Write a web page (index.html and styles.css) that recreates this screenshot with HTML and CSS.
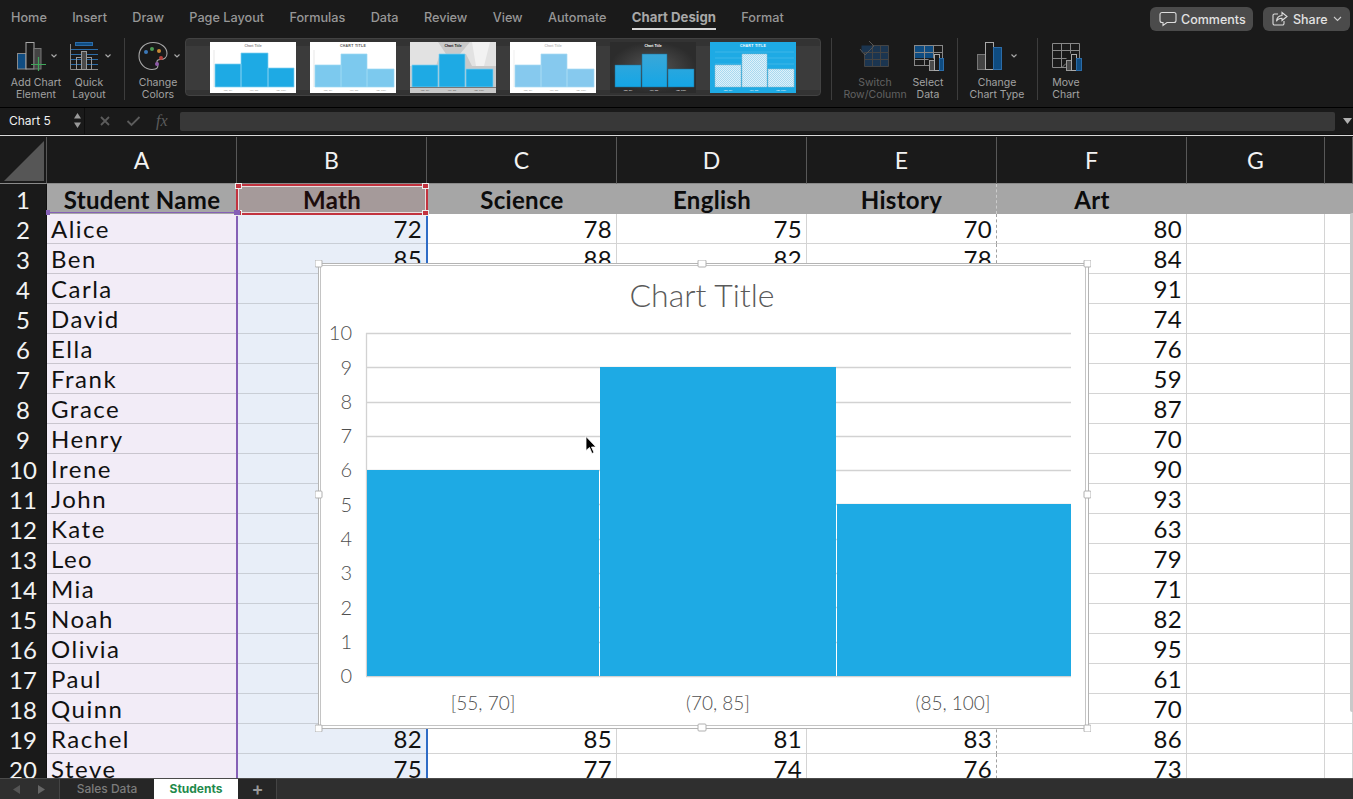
FILE: index.html
```html
<!DOCTYPE html>
<html lang="en">
<head>
  <meta charset="UTF-8">
  <title>Students - Chart Design</title>
  <link rel="stylesheet" href="styles.css">
</head>
<body>
  <header class="menubar">
    <nav class="tabs">
      <span>Home</span><span>Insert</span><span>Draw</span><span>Page Layout</span><span>Formulas</span><span>Data</span><span>Review</span><span>View</span><span>Automate</span><span class="active">Chart Design</span><span>Format</span>
    </nav>
    <button class="pill pill-comments">
      <svg width="18" height="16" viewBox="0 0 18 16"><path d="M3 1.5h12a2 2 0 0 1 2 2v6a2 2 0 0 1-2 2H8l-4 3v-3H3a2 2 0 0 1-2-2v-6a2 2 0 0 1 2-2z" fill="none" stroke="#ddd" stroke-width="1.1"/></svg>
      Comments
    </button>
    <button class="pill pill-share">
      <svg width="16" height="16" viewBox="0 0 16 16"><path d="M6 3H2.5A1.5 1.5 0 0 0 1 4.5v8A1.5 1.5 0 0 0 2.5 14h8a1.5 1.5 0 0 0 1.5-1.5V10" fill="none" stroke="#ddd" stroke-width="1.1"/><path d="M10 1.5l5 4-5 4V7.2c-3 0-4.5 1-5.5 3 .3-3.5 2-5.5 5.5-5.7z" fill="none" stroke="#ddd" stroke-width="1.1"/></svg>
      Share
      <svg width="9" height="6" viewBox="0 0 9 6"><path d="M1 1l3.5 3.5L8 1" fill="none" stroke="#ccc" stroke-width="1.1"/></svg>
    </button>
  </header>

  <section class="ribbon">
    <div class="tool tool-add">
      <svg width="60" height="34" viewBox="6 40 60 34">
        <rect x="17.5" y="53.5" width="8.5" height="15.5" fill="#0f4c81" stroke="#8a8a8a"/>
        <rect x="26" y="42.5" width="8" height="26.5" fill="#1a1a1a" stroke="#a8a8a8"/>
        <rect x="34" y="48.5" width="7" height="20.5" fill="#444" stroke="#777"/>
        <path d="M38.5 57v14M31 64.5h15" stroke="#3fa65a" stroke-width="1.2"/>
        <path class="chev" d="M51.5 54.5l2.5 2.5 2.5-2.5"/>
      </svg>
      <span>Add Chart<br>Element</span>
    </div>
    <div class="tool tool-quick">
      <svg width="46" height="34" viewBox="66 40 46 34">
        <rect x="75.5" y="42.5" width="17" height="3" fill="#0f4c81" stroke="#2c6ca8"/>
        <path d="M70 49.5h28M70 54.5h28M70 59.5h28M70 64.5h28" stroke="#2c6ca8"/>
        <path d="M70.5 44v25.5H98" fill="none" stroke="#888"/>
        <rect x="76.5" y="57.5" width="5" height="12" fill="none" stroke="#999"/>
        <rect x="81.5" y="51.5" width="5" height="18" fill="#4a4a4a" stroke="#999"/>
        <rect x="86.5" y="57.5" width="5" height="12" fill="none" stroke="#999"/>
        <path class="chev" d="M105.5 54.5l2.5 2.5 2.5-2.5"/>
      </svg>
      <span>Quick<br>Layout</span>
    </div>
    <div class="ribbon-sep sep-a"></div>
    <div class="tool tool-colors">
      <svg width="44" height="34" viewBox="136 40 44 34">
        <path d="M153 42.5c8 0 14 5 14 11 0 4-3 6-6.5 6-2.5 0-4 1-3.5 3 .5 2.5 1.5 3 .5 5-1 1.5-3 2-5.5 2-7 0-13-6-13-13.5 0-8 6-13.5 14-13.5z" fill="none" stroke="#a8a8a8" stroke-width="1.1"/>
        <circle cx="146" cy="52" r="2" fill="#3b78b8"/>
        <circle cx="152" cy="49" r="2" fill="#4c9a54"/>
        <circle cx="159" cy="51" r="2" fill="#c98a35"/>
        <circle cx="161" cy="58" r="2" fill="#b8403c"/>
        <circle cx="157" cy="64" r="2" fill="#8e5aa8"/>
        <path class="chev" d="M174.5 54.5l2.5 2.5 2.5-2.5"/>
      </svg>
      <span>Change<br>Colors</span>
    </div>

    <div class="gallery">
      <svg class="thumb" viewBox="0 0 86 51">
        <rect width="86" height="51" fill="#fff"/>
        <text class="t-title t-grey" x="43" y="5">Chart Title</text>
        <path d="M4 8v37" stroke="#ccc" stroke-width=".5"/>
        <path class="bar-a" d="M5 22h26v23H5zM31 11h27v34H31zM58 26h26v19H58z"/>
        <text class="t-axis t-grey" x="18" y="49">[55, 70]</text><text class="t-axis t-grey" x="44" y="49">(70, 85]</text><text class="t-axis t-grey" x="71" y="49">(85, 100]</text>
      </svg>
      <svg class="thumb" viewBox="0 0 86 51">
        <rect width="86" height="51" fill="#fff"/>
        <text class="t-title t-dark t-wide" x="43" y="5">CHART TITLE</text>
        <path d="M4 8v37" stroke="#ccc" stroke-width=".5"/>
        <path class="bar-b" d="M5 23h26v22H5zM31 12h26v33H31zM57 27h27v18H57z"/>
        <text class="t-axis t-grey" x="18" y="49">[55, 70]</text><text class="t-axis t-grey" x="44" y="49">(70, 85]</text><text class="t-axis t-grey" x="71" y="49">(85, 100]</text>
      </svg>
      <svg class="thumb" viewBox="0 0 86 51">
        <rect width="86" height="51" fill="#c9c9c9"/>
        <path d="M0 0h28l8 12 14 0 10-12h26v24H62L56 12H30L26 24H0z" fill="#e2e2e2"/>
        <path d="M62 0h18l-6 24h-8z" fill="#f2f2f2"/>
        <text class="t-title t-black" x="43" y="5">Chart Title</text>
        <path class="bar-a" d="M2 23h26v22H2zM29 12h26v33H29zM56 27h27v18H56z"/>
        <rect y="45" width="86" height="1" fill="#777"/>
        <text class="t-axis t-dark" x="15" y="49">[55, 70]</text><text class="t-axis t-dark" x="42" y="49">(70, 85]</text><text class="t-axis t-dark" x="69" y="49">(85, 100]</text>
      </svg>
      <svg class="thumb" viewBox="0 0 86 51">
        <rect width="86" height="51" fill="#fff"/>
        <text class="t-title t-pale" x="43" y="5">Chart Title</text>
        <path d="M4 8v37" stroke="#ddd" stroke-width=".5"/>
        <path class="bar-c" d="M5 23h26v22H5zM31 12h26v33H31zM57 27h27v18H57z"/>
        <text class="t-axis t-grey" x="18" y="49">[55, 70]</text><text class="t-axis t-grey" x="44" y="49">(70, 85]</text><text class="t-axis t-grey" x="71" y="49">(85, 100]</text>
      </svg>
      <svg class="thumb" viewBox="0 0 86 51">
        <defs>
          <radialGradient id="darkbg"><stop offset="0" stop-color="#555"/><stop offset="1" stop-color="#2c2c2c"/></radialGradient>
          <linearGradient id="darkbar" x1="0" y1="0" x2="0" y2="1"><stop offset="0" stop-color="#3aa7d8"/><stop offset="1" stop-color="#14a6e6"/></linearGradient>
        </defs>
        <rect width="86" height="51" fill="url(#darkbg)"/>
        <text class="t-title t-white" x="43" y="5">Chart Title</text>
        <path fill="url(#darkbar)" stroke="#1f6f96" stroke-width=".5" d="M5 23h26v22H5zM32 12h25v33H32zM58 27h26v18H58z"/>
        <text class="t-axis t-white" x="18" y="49">[55, 70]</text><text class="t-axis t-white" x="44" y="49">(70, 85]</text><text class="t-axis t-white" x="71" y="49">(85, 100]</text>
      </svg>
      <svg class="thumb" viewBox="0 0 86 51">
        <defs>
          <pattern id="check" width="2" height="2" patternUnits="userSpaceOnUse"><rect width="2" height="2" fill="#dff1fa"/><rect width="1" height="1" fill="#a9d9f0"/><rect x="1" y="1" width="1" height="1" fill="#a9d9f0"/></pattern>
        </defs>
        <rect width="86" height="51" fill="#1eaae4"/>
        <text class="t-title t-white t-wide" x="43" y="5">CHART TITLE</text>
        <path d="M5 10h79M5 16h79M5 22h79" stroke="#5cc3ec" stroke-width=".5"/>
        <path fill="url(#check)" stroke="#8fb9cc" stroke-width=".5" d="M5 23h26v22H5zM32 12h25v33H32zM58 27h26v18H58z"/>
        <text class="t-axis t-white" x="18" y="49">[55, 70]</text><text class="t-axis t-white" x="44" y="49">(70, 85]</text><text class="t-axis t-white" x="71" y="49">(85, 100]</text>
      </svg>
    </div>

    <div class="ribbon-sep sep-b"></div>
    <div class="tool tool-switch disabled">
      <svg width="64" height="34" viewBox="843 40 64 34">
        <path d="M861.5 45.5h27v21h-24v-14h-3z" fill="#1b3550"/>
        <path d="M864.5 52.5h24v14h-24zM864.5 59.5h24M872.5 45.5v21M880.5 45.5v21M872.5 45.5h16v7" fill="none" stroke="#444"/>
        <path d="M860 49l5 6 9-9M869 41l5 5-5 5" fill="none" stroke="#555"/>
      </svg>
      <span>Switch<br>Row/Column</span>
    </div>
    <div class="tool tool-select">
      <svg width="40" height="34" viewBox="908 40 40 34">
        <rect x="914.5" y="45.5" width="28" height="20" fill="#1a1a1a" stroke="#888"/>
        <rect x="915" y="46" width="18" height="12" fill="#0f4c81"/>
        <path d="M914.5 52.5h28M914.5 59.5h14M924.5 45.5v20M933.5 45.5v13" stroke="#888"/>
        <rect x="929.5" y="60.5" width="5" height="10" fill="#4a4a4a" stroke="#999"/>
        <rect x="934.5" y="54.5" width="5" height="16" fill="#1a1a1a" stroke="#aaa"/>
        <rect x="939.5" y="58.5" width="4" height="12" fill="#0f4c81" stroke="#2c6ca8"/>
      </svg>
      <span>Select<br>Data</span>
    </div>
    <div class="ribbon-sep sep-c"></div>
    <div class="tool tool-type">
      <svg width="70" height="34" viewBox="962 40 70 34">
        <rect x="977.5" y="54.5" width="8" height="15" fill="#444" stroke="#777"/>
        <rect x="985.5" y="42.5" width="8" height="27" fill="#1a1a1a" stroke="#a8a8a8"/>
        <rect x="993.5" y="47.5" width="8" height="22" fill="#0f4c81" stroke="#2c6ca8"/>
        <path class="chev" d="M1011.5 54.5l2.5 2.5 2.5-2.5"/>
      </svg>
      <span>Change<br>Chart Type</span>
    </div>
    <div class="ribbon-sep sep-d"></div>
    <div class="tool tool-move">
      <svg width="50" height="34" viewBox="1041 40 50 34">
        <path d="M1052.5 43.5h27v16M1052.5 43.5v24h16l5-4M1052.5 50.5h27M1052.5 58.5h14M1061.5 43.5v24M1070.5 43.5v10M1062 67.5l4-4h7" fill="none" stroke="#888"/>
        <rect x="1066.5" y="60.5" width="5" height="10" fill="#4a4a4a" stroke="#999"/>
        <rect x="1071.5" y="54.5" width="5" height="16" fill="#1a1a1a" stroke="#aaa"/>
        <rect x="1076.5" y="58.5" width="5" height="12" fill="#0f4c81" stroke="#2c6ca8"/>
      </svg>
      <span>Move<br>Chart</span>
    </div>
  </section>

  <section class="formula">
    <div class="namebox">
      <span>Chart 5</span>
      <svg width="9" height="17" viewBox="0 0 9 17"><path d="M4.5 1L8 6.5H1zM4.5 16L1 10.5h7z" fill="#9a9a9a"/></svg>
    </div>
    <div class="fx-btns">
      <svg width="12" height="12" viewBox="0 0 12 12"><path d="M2 2l8 8M10 2l-8 8" stroke="#5c5c5c" stroke-width="1.8"/></svg>
      <svg width="15" height="12" viewBox="0 0 15 12"><path d="M1.5 6l4 4 8-8" fill="none" stroke="#5c5c5c" stroke-width="1.8"/></svg>
      <span class="fx">fx</span>
    </div>
    <div class="formula-input"></div>
    <svg class="formula-arrow" width="9" height="6" viewBox="0 0 9 6"><path d="M0 0h9L4.5 6z" fill="#b0b0b0"/></svg>
  </section>

  <main class="sheet">
    <table class="cells">
      <colgroup><col class="c-head"><col class="c-wide"><col class="c-wide"><col class="c-wide"><col class="c-wide"><col class="c-wide"><col class="c-wide"><col class="c-g"><col class="c-h"></colgroup>
      <thead><tr><th class="corner"><svg width="46" height="46" viewBox="0 0 46 46"><path d="M4 44L44 4v40z" fill="#565656"/></svg></th><th>A</th><th>B</th><th>C</th><th>D</th><th>E</th><th>F</th><th>G</th><th></th></tr></thead>
      <tbody>
        <tr class="titles"><th>1</th><td>Student Name</td><td>Math</td><td>Science</td><td>English</td><td>History</td><td>Art</td><td></td><td></td></tr>
        <tr><th>2</th><td>Alice</td><td>72</td><td>78</td><td>75</td><td>70</td><td>80</td><td></td><td></td></tr>
        <tr><th>3</th><td>Ben</td><td>85</td><td>88</td><td>82</td><td>78</td><td>84</td><td></td><td></td></tr>
        <tr><th>4</th><td>Carla</td><td></td><td></td><td></td><td></td><td>91</td><td></td><td></td></tr>
        <tr><th>5</th><td>David</td><td></td><td></td><td></td><td></td><td>74</td><td></td><td></td></tr>
        <tr><th>6</th><td>Ella</td><td></td><td></td><td></td><td></td><td>76</td><td></td><td></td></tr>
        <tr><th>7</th><td>Frank</td><td></td><td></td><td></td><td></td><td>59</td><td></td><td></td></tr>
        <tr><th>8</th><td>Grace</td><td></td><td></td><td></td><td></td><td>87</td><td></td><td></td></tr>
        <tr><th>9</th><td>Henry</td><td></td><td></td><td></td><td></td><td>70</td><td></td><td></td></tr>
        <tr><th>10</th><td>Irene</td><td></td><td></td><td></td><td></td><td>90</td><td></td><td></td></tr>
        <tr><th>11</th><td>John</td><td></td><td></td><td></td><td></td><td>93</td><td></td><td></td></tr>
        <tr><th>12</th><td>Kate</td><td></td><td></td><td></td><td></td><td>63</td><td></td><td></td></tr>
        <tr><th>13</th><td>Leo</td><td></td><td></td><td></td><td></td><td>79</td><td></td><td></td></tr>
        <tr><th>14</th><td>Mia</td><td></td><td></td><td></td><td></td><td>71</td><td></td><td></td></tr>
        <tr><th>15</th><td>Noah</td><td></td><td></td><td></td><td></td><td>82</td><td></td><td></td></tr>
        <tr><th>16</th><td>Olivia</td><td></td><td></td><td></td><td></td><td>95</td><td></td><td></td></tr>
        <tr><th>17</th><td>Paul</td><td></td><td></td><td></td><td></td><td>61</td><td></td><td></td></tr>
        <tr><th>18</th><td>Quinn</td><td></td><td></td><td></td><td></td><td>70</td><td></td><td></td></tr>
        <tr><th>19</th><td>Rachel</td><td>82</td><td>85</td><td>81</td><td>83</td><td>86</td><td></td><td></td></tr>
        <tr><th>20</th><td>Steve</td><td>75</td><td>77</td><td>74</td><td>76</td><td>73</td><td></td><td></td></tr>
      </tbody>
    </table>

    <!-- range highlights that excel draws for the chart source -->
    <div class="range range-name"></div>
    <div class="range range-name-side"></div>
    <div class="range range-values"></div>
    <div class="range range-title">
      <i class="grip grip-tl"></i><i class="grip grip-tr"></i><i class="grip grip-bl"></i><i class="grip grip-br"></i>
    </div>
    <i class="grip-purple grip-p1"></i><i class="grip-purple grip-p2"></i>

    <div class="scroll-thumb"></div>

    <svg class="chart" width="776" height="472" viewBox="315 260 776 472">
      <rect x="318.5" y="263.5" width="770" height="465" fill="#fff" stroke="#b4b4b4"/>
      <rect x="320.5" y="265.5" width="765" height="460" fill="#fff" stroke="#c4c4c4"/>
      <text class="chart-title" x="702" y="307">Chart Title</text>

      <path class="gridline" d="M366 333.5h705M366 367.5h705M366 402.5h705M366 436.5h705M366 470.5h705M366 504.5h705M366 539.5h705M366 573.5h705M366 607.5h705M366 642.5h705M366 676.5h705M366.5 333v343"/>
      <rect class="bar" x="367" y="470" width="232" height="206"/>
      <rect class="bar" x="600" y="367" width="236" height="309"/>
      <rect class="bar" x="837" y="504" width="234" height="172"/>

      <g class="yaxis">
        <text x="352" y="340">10</text><text x="352" y="375">9</text><text x="352" y="409">8</text><text x="352" y="443">7</text><text x="352" y="477">6</text><text x="352" y="512">5</text><text x="352" y="546">4</text><text x="352" y="580">3</text><text x="352" y="615">2</text><text x="352" y="649">1</text><text x="352" y="683">0</text>
      </g>
      <g class="xaxis">
        <text x="483" y="710">[55, 70]</text><text x="718" y="710">(70, 85]</text><text x="953" y="710">(85, 100]</text>
      </g>

      <g class="handles">
        <rect x="315" y="260" width="7" height="7" rx="1"/><rect x="698" y="260" width="8" height="7" rx="1"/><rect x="1084" y="260" width="7" height="7" rx="1"/>
        <rect x="315" y="491" width="7" height="7" rx="1"/><rect x="1084" y="491" width="7" height="7" rx="1"/>
        <rect x="315" y="725" width="7" height="7" rx="1"/><rect x="698" y="724" width="8" height="7" rx="1"/><rect x="1084" y="725" width="7" height="7" rx="1"/>
      </g>
      <path d="M586 436.5v14l3.5-3 2.5 6 2-1-2.5-5.5h4.5z" fill="#000" stroke="#fff" stroke-width=".8"/>
    </svg>
  </main>

  <footer class="sheetbar">
    <div class="sheet-nav">
      <svg width="8" height="9" viewBox="0 0 8 9"><path d="M7 0v9L0 4.5z" fill="#555"/></svg>
      <svg width="8" height="9" viewBox="0 0 8 9"><path d="M1 0v9l7-4.5z" fill="#666"/></svg>
    </div>
    <div class="sheet-tab">Sales Data</div>
    <div class="sheet-tab current">Students</div>
    <div class="sheet-add">+</div>
  </footer>
</body>
</html>
```

FILE: styles.css
```css
* {
  box-sizing: border-box;
}
html, body {
  margin: 0;
  height: 799px;
  overflow: hidden;
}
body {
  display: flex;
  flex-direction: column;
  background: #1a1a1a;
  font-family: Inter, "Liberation Sans", sans-serif;
  color: #a8a8a8;
}

/* top tabs */
.menubar {
  height: 35px;
  flex: none;
  display: flex;
  align-items: flex-start;
  padding-left: 11px;
}
.tabs {
  display: flex;
  gap: 25.3px;
  font-size: 12.7px;
  font-weight: 500;
  color: #979797;
  margin-top: 9px;
  flex: 1;
}
.tabs span {
  line-height: 17px;
  height: 21px;
}
.tabs .active {
  font-size: 13.2px;
  font-weight: 700;
  color: #a8a8a8;
  border-bottom: 2px solid #d8d8d8;
}
.pill {
  height: 24px;
  margin-top: 7px;
  border: 0;
  border-radius: 6px;
  background: #4b4b4b;
  color: #e2e2e2;
  font: 500 12.5px Inter, "Liberation Sans", sans-serif;
  display: flex;
  align-items: center;
  padding: 0;
}
.pill-comments {
  width: 103px;
  padding-left: 9px;
  gap: 4px;
  margin-right: 10px;
}
.pill-share {
  width: 87px;
  padding-left: 9px;
  gap: 5px;
  margin-right: 3px;
}

/* ribbon */
.ribbon {
  height: 73px;
  flex: none;
  display: flex;
  align-items: flex-start;
  padding: 3px 0 0 6px;
  border-bottom: 1px solid #000;
}
.tool {
  display: flex;
  flex-direction: column;
  align-items: center;
  margin-top: 2px;
  font-size: 10.5px;
  line-height: 12px;
  text-align: center;
  color: #a2a2a2;
  white-space: nowrap;
}
.tool svg {
  display: block;
  margin-bottom: 3px;
}
.tool.disabled {
  color: #626262;
}
.chev {
  fill: none;
  stroke: #a8a8a8;
  stroke-width: 1.2;
}
.tool-add { width: 60px; }
.tool-quick { width: 46px; }
.tool-colors { width: 44px; margin-left: 11px; }
.tool-switch { width: 64px; margin-left: 11px; }
.tool-select { width: 40px; margin-left: 1px; }
.tool-type { width: 70px; margin-left: 4px; }
.tool-move { width: 50px; margin-left: 3px; }
.ribbon-sep {
  width: 1px;
  height: 62px;
  background: #3d3d3d;
}
.sep-a { margin-left: 12px; }
.sep-b { margin-left: 10px; }
.sep-c { margin-left: 9px; }
.sep-d { margin-left: 5px; }

.gallery {
  width: 636px;
  height: 58px;
  margin-left: 5px;
  display: flex;
  align-items: center;
  gap: 14px;
  padding-left: 24px;
  background: linear-gradient(#333 0 7px, #3b3b3b 7px 51px, #333 51px);
  border: 1px solid #424242;
  border-radius: 4px;
}
.thumb {
  width: 86px;
  height: 51px;
  flex: none;
}
.thumb text {
  text-anchor: middle;
  font-family: "Liberation Sans", sans-serif;
}
.t-title { font-size: 3.5px; font-weight: 700; }
.t-wide { letter-spacing: .3px; }
.t-axis { font-size: 2.5px; }
.t-grey { fill: #8a8a8a; }
.t-dark { fill: #555; }
.t-black { fill: #111; }
.t-pale { fill: #bbb; }
.t-white { fill: #fff; }
.bar-a { fill: #1eaae4; stroke: #7fd0f0; stroke-width: .7; }
.bar-b { fill: #7cc9ee; stroke: #9bd8f3; stroke-width: .7; }
.bar-c { fill: #86c9ee; stroke: #a8daf4; stroke-width: .7; }

/* formula bar */
.formula {
  height: 27px;
  flex: none;
  display: flex;
  align-items: center;
  border-bottom: 1px solid #111;
}
.namebox {
  width: 85px;
  height: 100%;
  display: flex;
  align-items: center;
  justify-content: space-between;
  padding: 0 2px 2px 9px;
  border-right: 1px solid #0e0e0e;
  color: #f0f0f0;
  font-size: 12px;
}
.fx-btns {
  width: 95px;
  display: flex;
  align-items: center;
  padding-left: 14px;
  gap: 15px;
}
.fx {
  font: italic 16px "Liberation Serif", serif;
  color: #5c5c5c;
}
.formula-input {
  flex: 1;
  height: 19px;
  background: #383838;
  border-radius: 2px;
}
.formula-arrow {
  margin: 0 1px 0 8px;
}

/* grid */
.sheet {
  position: relative;
  flex: 1;
  overflow: hidden;
  border-top: 1px solid #d8d8d8;
  padding-top: 1px;
}
.cells {
  border-collapse: separate;
  border-spacing: 0;
  table-layout: fixed;
  width: 1353px;
  font-family: Lato, "Liberation Sans", sans-serif;
  font-size: 24px;
  color: #111;
}
.c-head { width: 47px; }
.c-wide { width: 190px; }
.c-g { width: 138px; }
.c-h { width: 28px; }
.cells thead th {
  height: 47px;
  padding: 0;
  background: #1a1a1a;
  color: #f2f2f2;
  font-weight: 400;
  font-size: 23px;
  border-right: 1px solid #585858;
  border-bottom: 1px solid #8a8a8a;
}
.corner svg {
  display: block;
}
.cells tbody th {
  height: 30px;
  padding: 0;
  background: #1a1a1a;
  color: #f2f2f2;
  font-weight: 400;
  line-height: 29px;
  border-right: 1px solid #111;
}
.cells td {
  height: 30px;
  padding: 0 4px;
  line-height: 29px;
  text-align: right;
  background: #fff;
  letter-spacing: .3px;
  border-right: 1px solid #d4d4d4;
  border-bottom: 1px solid #d4d4d4;
  white-space: nowrap;
}
.cells td:nth-child(2) {
  text-align: left;
  letter-spacing: 1.5px;
  background: #f2ecf7;
  border-color: #c9c5ce;
}
.cells td:nth-child(3) {
  background: #e8eef8;
  border-color: #c9ced6;
}
.cells td:nth-child(6) {
  border-right: 1px dashed #a0a0a0;
}
.cells .titles td {
  text-align: center;
  letter-spacing: .3px;
  background: #a6a6a6;
  font-weight: 700;
  color: #0c0c0c;
  border-right: 0;
  border-bottom: 0;
}
.cells .titles td:nth-child(3) {
  background: #a59a9a;
  color: #1c0c0c;
}
.cells .titles td:nth-child(6) {
  border-right: 1px dashed #ccc;
}

/* source ranges over the cells */
.range {
  position: absolute;
}
.range-name {
  left: 47px;
  top: 76px;
  width: 190px;
  height: 1px;
  background: #8560b6;
}
.range-name-side {
  left: 236px;
  top: 76px;
  bottom: 0;
  width: 2px;
  background: #8560b6;
}
.range-values {
  left: 426px;
  top: 78px;
  bottom: 0;
  width: 2px;
  background: #2f6cc6;
}
.range-title {
  left: 236px;
  top: 48px;
  width: 192px;
  height: 31px;
  border: 2px solid #c2333f;
  box-shadow: inset 0 0 0 1px #e8e0e0;
}
.grip {
  position: absolute;
  width: 5px;
  height: 4px;
  background: #c2333f;
  outline: 1px solid #eee;
}
.grip-tl { left: -2px; top: -2px; }
.grip-tr { right: -2px; top: -2px; }
.grip-bl { left: -2px; bottom: -2px; }
.grip-br { right: -2px; bottom: -2px; }
.grip-purple {
  position: absolute;
  top: 74px;
  height: 5px;
  background: #8560b6;
}
.grip-p1 { left: 46px; width: 4px; }
.grip-p2 { left: 234px; width: 6px; }
.scroll-thumb {
  position: absolute;
  right: 0;
  top: 77px;
  width: 3px;
  height: 499px;
  background: #c9c9c9;
  border-radius: 2px 0 0 2px;
}

/* chart sits on top of the cells */
.chart {
  position: absolute;
  left: 315px;
  top: 124px;
}
.chart text {
  font-family: Lato, "Liberation Sans", sans-serif;
}
.chart-title {
  font-size: 32px;
  fill: #5a5a5a;
  text-anchor: middle;
  font-weight: 300;
}
.gridline {
  fill: none;
  stroke: #d2d2d2;
  stroke-width: 1.3;
}
.bar {
  fill: #1eaae4;
}
.yaxis text {
  font-size: 20px;
  font-weight: 300;
  fill: #4f4f4f;
  text-anchor: end;
}
.xaxis text {
  font-size: 19px;
  font-weight: 300;
  fill: #4f4f4f;
  text-anchor: middle;
}
.handles rect {
  fill: #fff;
  stroke: #b0b0b0;
}

/* sheet tabs */
.sheetbar {
  height: 21px;
  flex: none;
  display: flex;
  background: #2f2f2f;
  border-top: 1px solid #4a4a4a;
  font-size: 12px;
}
.sheet-nav {
  width: 60px;
  display: flex;
  align-items: center;
  gap: 16px;
  padding-left: 13px;
  border-right: 1px solid #444;
}
.sheet-tab {
  width: 94px;
  text-align: center;
  line-height: 20px;
  background: #262626;
  color: #7c7c7c;
  font-weight: 500;
}
.sheet-tab.current {
  width: 84px;
  background: #fff;
  color: #1f8a4c;
  font-weight: 700;
}
.sheet-add {
  width: 39px;
  padding-left: 1px;
  text-align: center;
  font-size: 18px;
  font-weight: 600;
  line-height: 19px;
  background: #262626;
  color: #999;
  border-right: 1px solid #444;
}
```
